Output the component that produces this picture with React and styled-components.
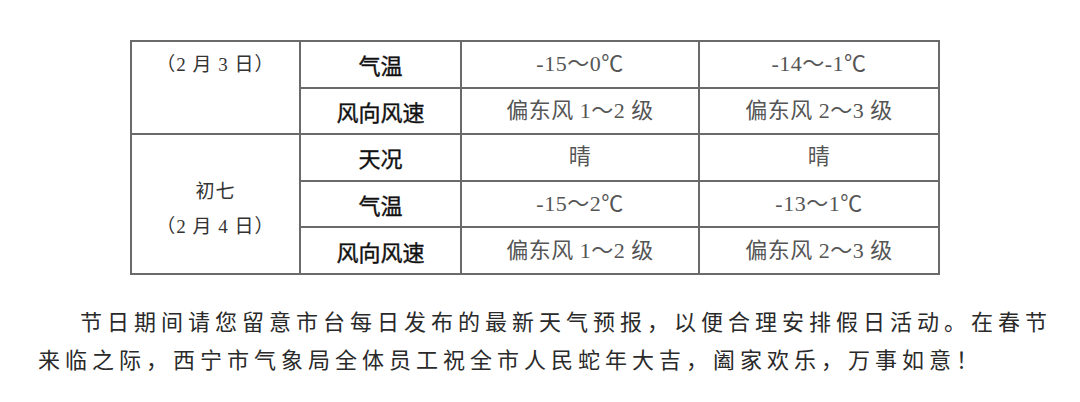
import React from "react";
import styled, { createGlobalStyle } from "styled-components";

const Global = createGlobalStyle`
  html, body { margin: 0; padding: 0; background: #fff; }
  body { width: 1080px; height: 402px; overflow: hidden; }
`;

const Page = styled.div`
  padding: 40px 0 0 0;
  display: flex;
  flex-direction: column;
`;

const Table = styled.table`
  margin-left: 130px;
  width: 808px;
  border-collapse: collapse;
  table-layout: fixed;
  border: 2px solid #6a6a6a;
`;

const Cell = styled.td`
  border: 2px solid #6a6a6a;
  height: 44.6px;
  padding: 0;
  text-align: center;
  vertical-align: middle;
  font-family: "Liberation Serif", "Noto Sans CJK SC", serif;
  font-size: 22px;
  color: #555;
  line-height: 1;
`;

const DayCell = styled(Cell)`
  vertical-align: ${(p) => (p.$top ? "top" : "middle")};
  font-size: 19px;
  letter-spacing: 1px;
  color: #333;
  line-height: 35px;
  padding-top: ${(p) => (p.$top ? "5px" : "10px")};
`;

const LabelCell = styled(Cell)`
  font-family: "Noto Sans CJK SC", sans-serif;
  font-weight: 400;
  -webkit-text-stroke: 0.4px #111;
  font-size: 22px;
  color: #111;
`;

const ValueText = styled.span`
  letter-spacing: 0.5px;
`;

const Para = styled.p`
  margin: 26px 0 0 38px;
  width: 1018px;
  font-family: "Noto Sans CJK SC", sans-serif;
  font-size: 22px;
  letter-spacing: 5px;
  line-height: 38px;
  color: #2a2a2a;
  text-indent: 42px;
`;

const groups = [
  {
    day: ["（2 月 3 日）"],
    top: true,
    rows: [
      ["气温", "-15～0℃", "-14～-1℃"],
      ["风向风速", "偏东风 1～2 级", "偏东风 2～3 级"],
    ],
  },
  {
    day: ["初七", "（2 月 4 日）"],
    rows: [
      ["天况", "晴", "晴"],
      ["气温", "-15～2℃", "-13～1℃"],
      ["风向风速", "偏东风 1～2 级", "偏东风 2～3 级"],
    ],
  },
];

export default function App() {
  return (
    <>
      <Global />
      <Page>
        <Table>
          <colgroup>
            <col style={{ width: 169 }} />
            <col style={{ width: 161 }} />
            <col style={{ width: 238 }} />
            <col style={{ width: 240 }} />
          </colgroup>
          <tbody>
            {groups.map((g, gi) =>
              g.rows.map((r, ri) => (
                <tr key={`${gi}-${ri}`}>
                  {ri === 0 && (
                    <DayCell rowSpan={g.rows.length} $top={g.top}>
                      {g.day.map((d, i) => (
                        <div key={i}>{d}</div>
                      ))}
                    </DayCell>
                  )}
                  <LabelCell>{r[0]}</LabelCell>
                  <Cell>
                    <ValueText>{r[1]}</ValueText>
                  </Cell>
                  <Cell>
                    <ValueText>{r[2]}</ValueText>
                  </Cell>
                </tr>
              ))
            )}
          </tbody>
        </Table>
        <Para>
          节日期间请您留意市台每日发布的最新天气预报，以便合理安排假日活动。在春节来临之际，西宁市气象局全体员工祝全市人民蛇年大吉，阖家欢乐，万事如意！
        </Para>
      </Page>
    </>
  );
}
